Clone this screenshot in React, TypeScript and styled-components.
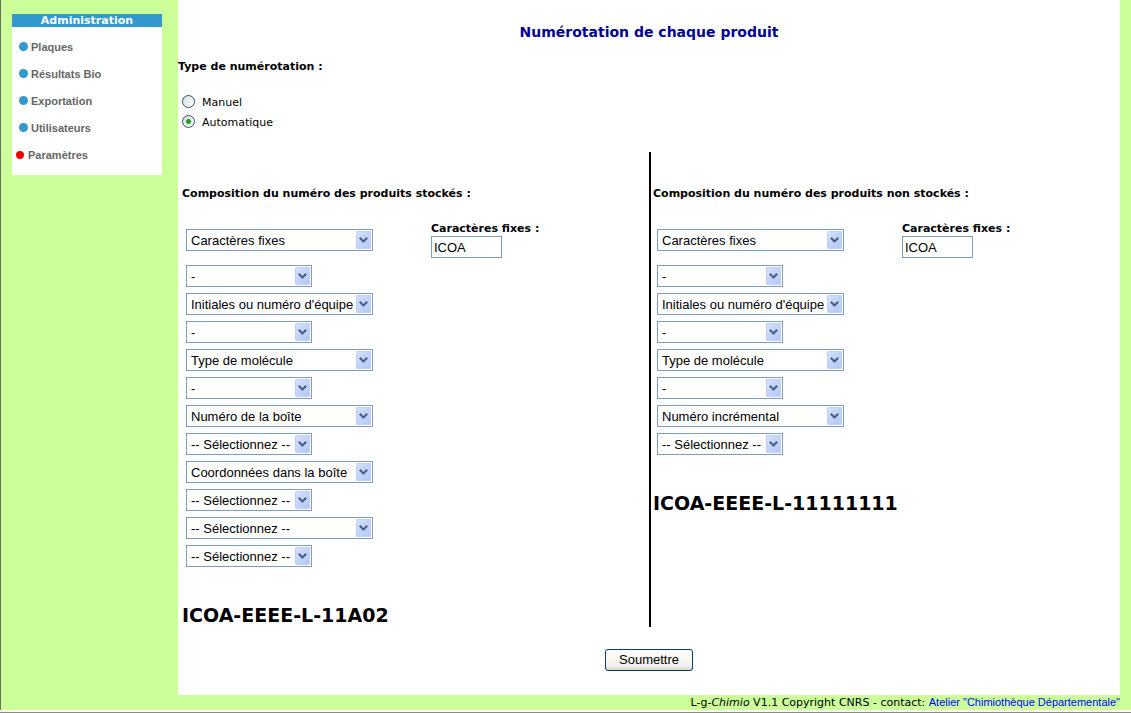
import React, { useId, useState } from "react";
import styled, { createGlobalStyle } from "styled-components";

const verdana = `Verdana, "DejaVu Sans", sans-serif`;
const arial = `"Liberation Sans", Arial, sans-serif`;

const GlobalStyle = createGlobalStyle`
  *, *::before, *::after { box-sizing: border-box; }
  body { margin: 0; background: #fff; font: 11px/14px ${verdana}; color: #000; }
`;

const Frame = styled.div`
  min-height: 100vh;
  display: flex;
  flex-direction: column;
`;

const Page = styled.div`
  flex: 1;
  display: flex;
  flex-direction: column;
  padding-right: 11px;
  background: #ccff99;
  border-left: 1px solid #716f64;
`;

const StatusEdge = styled.div`
  height: 4px;
  background: #d6d2c6;
  border-top: 2px solid #fff;
  box-shadow: inset 0 1px #8c8a80;
`;

const Columns = styled.div`
  flex: 1;
  display: grid;
  grid-template-columns: 177px minmax(0, 1fr);
`;

const Sidebar = styled.aside`
  padding: 14px 16px 14px 11px;
`;

const Menu = styled.nav`
  background: #fff;
`;

const MenuTitle = styled.h2`
  margin: 0;
  background: #3399cc;
  color: #fff;
  font-size: 11px;
  line-height: 14px;
  height: 13px;
  text-align: center;
`;

const MenuList = styled.ul`
  list-style: none;
  margin: 0;
  padding: 6px 0 7px;
`;

const MenuItem = styled.li<{ $active?: boolean }>`
  padding-left: ${(p) => (p.$active ? 4 : 7)}px;
  height: 27px;
  display: flex;
`;

const MenuLink = styled.a<{ $active?: boolean }>`
  display: flex;
  align-items: center;
  gap: ${(p) => (p.$active ? 4 : 3)}px;
  color: #666;
  font: bold 11px/14px ${arial};
  text-decoration: none;
  &::before {
    content: "";
    width: ${(p) => (p.$active ? 8 : 9)}px;
    height: ${(p) => (p.$active ? 8 : 9)}px;
    border-radius: 50%;
    background: ${(p) => (p.$active ? "#ff0000" : "#3399cc")};
  }
`;

const Main = styled.main`
  background: #fff;
  padding: 22px 0 24px;
`;

const Title = styled.h1`
  margin: 0;
  color: #000099;
  font-size: 14px;
  line-height: 20px;
  text-align: center;
`;

const TypeGroup = styled.fieldset`
  margin: 18px 0 0;
  padding: 0;
  border: 0;
`;

const Legend = styled.legend`
  padding: 0;
  font-weight: bold;
`;

const RadioList = styled.div`
  display: flex;
  flex-direction: column;
  padding: 19px 4px 0;
`;

const RadioLabel = styled.label`
  display: flex;
  align-items: flex-start;
  gap: 7px;
  height: 20px;
  padding-top: 2px;
`;

const RadioText = styled.span`
  padding-top: 1px;
`;

const Radio = styled.input`
  appearance: none;
  width: 13px;
  height: 13px;
  margin: 0;
  border: 1px solid #2a5580;
  border-radius: 50%;
  background: linear-gradient(135deg, #dcdcd6, #fff);
  &:checked {
    background:
      radial-gradient(circle, #21a121 0 2px, transparent 3px),
      linear-gradient(135deg, #dcdcd6, #fff);
  }
`;

const Halves = styled.div`
  display: grid;
  grid-template-columns: 1fr 1fr;
  margin-top: 19px;
`;

const Half = styled.section<{ $divided?: boolean }>`
  padding: 35px 0 0 ${(p) => (p.$divided ? 2 : 4)}px;
  border-left: ${(p) => (p.$divided ? "2px solid #000" : "0")};
`;

const HalfTitle = styled.h2`
  margin: 0;
  font-size: 11px;
  line-height: 14px;
`;

const Fields = styled.div`
  display: flex;
  flex-direction: column;
  align-items: flex-start;
  gap: 6px;
  padding: 21px 4px 0;
`;

const FirstRow = styled.div`
  display: grid;
  grid-template-columns: 245px auto;
  align-items: center;
  padding-bottom: 1px;
`;

const TextField = styled.label`
  display: flex;
  flex-direction: column;
  font-weight: bold;
`;

const TextInput = styled.input`
  width: 71px;
  height: 22px;
  padding: 0 2px;
  border: 1px solid #7f9db9;
  border-radius: 0;
  background: #fff;
  font: 13px/18px ${arial};
  color: #000;
`;

const SelectBox = styled.div<{ $wide?: boolean }>`
  position: relative;
  width: ${(p) => (p.$wide ? 187 : 126)}px;
  height: 22px;
`;

const NativeSelect = styled.select`
  appearance: none;
  width: 100%;
  height: 100%;
  padding: 1px 18px 0 4px;
  border: 1px solid #7f9db9;
  border-radius: 0;
  background: #fff;
  font: 13px/18px ${arial};
  color: #000;
`;

const Arrow = styled.svg`
  position: absolute;
  top: 2px;
  right: 2px;
  border-radius: 1px;
  background: linear-gradient(135deg, #d3e0fd, #b3c9f9);
  border: 1px solid #c0d0f8;
  pointer-events: none;
`;

const Preview = styled.output`
  display: block;
  margin-top: 37px;
  padding-bottom: 1px;
  font-size: 19px;
  line-height: 22px;
  font-weight: bold;
`;

const Actions = styled.div`
  display: flex;
  justify-content: center;
  margin-top: 22px;
`;

const SubmitButton = styled.button`
  width: 88px;
  height: 22px;
  padding: 0;
  border: 1px solid #003c74;
  border-radius: 3px;
  background: linear-gradient(#fff, #f1f0ea 80%, #d8d3c8);
  font: 13px/18px ${arial};
  color: #000;
`;

const Footer = styled.footer`
  text-align: right;
  line-height: 14px;
`;

const ContactLink = styled.a`
  color: #0000ff;
  font: 11px/14px ${arial};
  text-decoration: none;
`;

function Select({ value, wide, label }: { value: string; wide?: boolean; label: string }) {
  return (
    <SelectBox $wide={wide}>
      <NativeSelect aria-label={label} defaultValue={value}>
        <option>{value}</option>
      </NativeSelect>
      <Arrow width="15" height="18" viewBox="0 0 13 16" aria-hidden="true">
        <path d="M2.8 5.8 6.5 9.5l3.7-3.7" fill="none" stroke="#4d6185" strokeWidth="2.2" />
      </Arrow>
    </SelectBox>
  );
}

function Composition({ title, parts, preview, divided }: {
  title: string; parts: string[]; preview: string; divided?: boolean;
}) {
  const inputId = useId();
  const [first, ...rest] = parts;
  return (
    <Half $divided={divided}>
      <HalfTitle>{title}</HalfTitle>
      <Fields>
        <FirstRow>
          <Select wide value={first} label="Partie 1" />
          <TextField htmlFor={inputId}>
            Caractères fixes :
            <TextInput id={inputId} type="text" defaultValue="ICOA" />
          </TextField>
        </FirstRow>
        {rest.map((part, i) => (
          <Select key={i} value={part} wide={i % 2 === 1} label={`Partie ${i + 2}`} />
        ))}
      </Fields>
      <Preview>{preview}</Preview>
    </Half>
  );
}

const none = "-- Sélectionnez --";
const menu = ["Plaques", "Résultats Bio", "Exportation", "Utilisateurs", "Paramètres"];
const stored = [
  "Caractères fixes", "-", "Initiales ou numéro d'équipe", "-", "Type de molécule", "-",
  "Numéro de la boîte", none, "Coordonnées dans la boîte", none, none, none,
];
const notStored = [
  "Caractères fixes", "-", "Initiales ou numéro d'équipe", "-", "Type de molécule", "-",
  "Numéro incrémental", none,
];

export default function App() {
  const [mode, setMode] = useState("Automatique");
  return (
    <Frame>
      <GlobalStyle />
      <Page>
        <Columns>
          <Sidebar>
            <Menu>
              <MenuTitle>Administration</MenuTitle>
              <MenuList>
                {menu.map((name) => {
                  const active = name === "Paramètres";
                  return (
                    <MenuItem key={name} $active={active}>
                      <MenuLink href="#" $active={active}>{name}</MenuLink>
                    </MenuItem>
                  );
                })}
              </MenuList>
            </Menu>
          </Sidebar>
          <Main>
            <Title>Numérotation de chaque produit</Title>
            <TypeGroup>
              <Legend>Type de numérotation :</Legend>
              <RadioList>
                {["Manuel", "Automatique"].map((name) => (
                  <RadioLabel key={name}>
                    <Radio type="radio" name="mode" checked={mode === name} onChange={() => setMode(name)} />
                    <RadioText>{name}</RadioText>
                  </RadioLabel>
                ))}
              </RadioList>
            </TypeGroup>
            <Halves>
              <Composition title="Composition du numéro des produits stockés :" parts={stored} preview="ICOA-EEEE-L-11A02" />
              <Composition divided title="Composition du numéro des produits non stockés :" parts={notStored} preview="ICOA-EEEE-L-11111111" />
            </Halves>
            <Actions>
              <SubmitButton type="button">Soumettre</SubmitButton>
            </Actions>
          </Main>
        </Columns>
        <Footer>
          L-g-<em>Chimio</em> V1.1 Copyright CNRS - contact:{" "}
          <ContactLink href="#">Atelier "Chimiothèque Départementale"</ContactLink>
        </Footer>
      </Page>
      <StatusEdge />
    </Frame>
  );
}
